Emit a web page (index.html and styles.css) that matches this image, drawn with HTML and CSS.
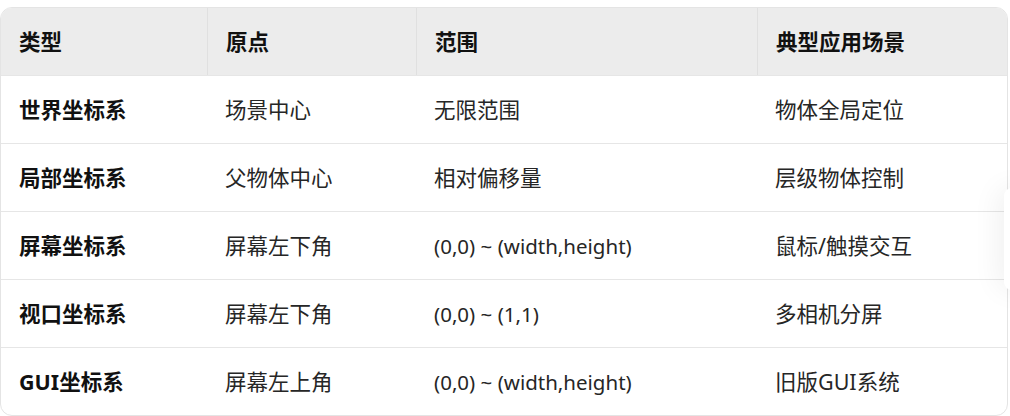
FILE: index.html
```html
<!DOCTYPE html>
<html lang="zh-CN">
<head>
<meta charset="utf-8">
<link rel="stylesheet" href="styles.css">
</head>
<body>
<div class="wrap">
  <table class="grid">
    <thead>
      <tr>
        <th class="c1">类型</th>
        <th class="c2">原点</th>
        <th class="c3">范围</th>
        <th class="c4">典型应用场景</th>
      </tr>
    </thead>
    <tbody>
      <tr><td class="name">世界坐标系</td><td>场景中心</td><td>无限范围</td><td>物体全局定位</td></tr>
      <tr><td class="name">局部坐标系</td><td>父物体中心</td><td>相对偏移量</td><td>层级物体控制</td></tr>
      <tr><td class="name">屏幕坐标系</td><td>屏幕左下角</td><td class="latin">(0,0) ~ (width,height)</td><td>鼠标/触摸交互</td></tr>
      <tr><td class="name">视口坐标系</td><td>屏幕左下角</td><td class="latin">(0,0) ~ (1,1)</td><td>多相机分屏</td></tr>
      <tr><td class="name">GUI坐标系</td><td>屏幕左上角</td><td class="latin">(0,0) ~ (width,height)</td><td>旧版GUI系统</td></tr>
    </tbody>
  </table>
  <div class="side-tab"></div>
</div>
</body>
</html>
```

FILE: styles.css
```css
html, body {
  margin: 0;
  padding: 0;
  background: #ffffff;
}
body {
  font-family: "Noto Sans", "Noto Sans CJK SC", sans-serif;
  color: #1f1f1f;
  overflow: hidden;
}
.wrap {
  position: relative;
  padding-top: 7px;
  width: 1010px;
  height: 409px;
}
.grid {
  width: 1008px;
  border-collapse: separate;
  border-spacing: 0;
  border: 1px solid #e4e4e4;
  border-radius: 12px;
  overflow: hidden;
  table-layout: fixed;
}
.grid th, .grid td {
  text-align: left;
  padding: 0 18px;
  font-size: 21.5px;
  line-height: 26px;
  white-space: nowrap;
}
.grid th {
  background: #ececec;
  height: 67px;
  font-weight: 700;
  color: #111;
  border-left: 1px solid #e0e0e0;
}
.grid th.c1 { border-left: none; width: 170px; }
.grid th.c2 { width: 172px; }
.grid th.c3 { width: 304px; }
.grid td {
  height: 67px;
  border-top: 1px solid #e6e6e6;
  color: #262626;
}
.grid td.name {
  font-weight: 700;
  color: #111;
}
.grid td.latin {
  font-size: 20.5px;
}
.side-tab {
  position: absolute;
  left: 1004px;
  top: 188px;
  width: 40px;
  height: 102px;
  background: #fff;
  border-radius: 8px;
  box-shadow: -6px 0 28px rgba(0, 0, 0, 0.06);
}
```
